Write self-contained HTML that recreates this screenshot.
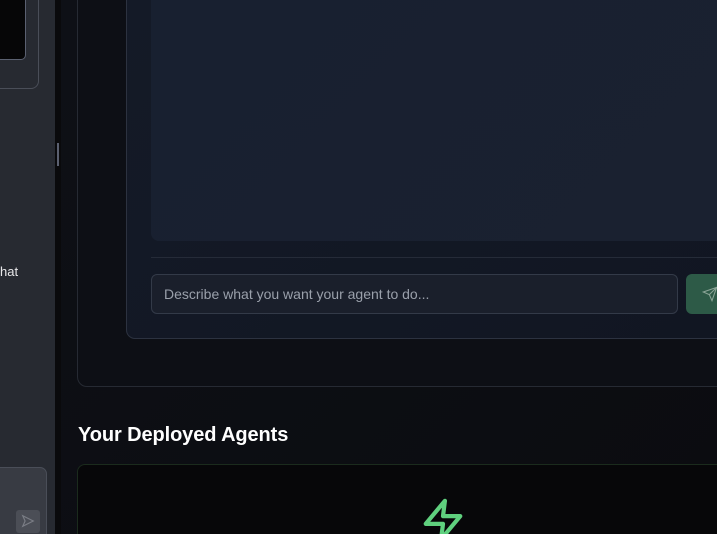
<!DOCTYPE html>
<html><head><meta charset="utf-8"><style>
*{margin:0;padding:0;box-sizing:border-box}
html,body{width:717px;height:534px;overflow:hidden}
body{background:#0b0c0f;font-family:"Liberation Sans",sans-serif;position:relative}
.side{position:absolute;left:0;top:0;width:55px;height:534px;background:#272a31;overflow:hidden}
.gut{position:absolute;left:55px;top:0;width:6px;height:534px;background:#0a0a0c}
.handle{position:absolute;left:57px;top:143px;width:2px;height:23px;background:#5b6070}
.main{position:absolute;left:61px;top:0;right:0;bottom:0;background:linear-gradient(135deg,#0e1016,#0b0c10)}
</style></head><body>
<div class="side">
 <div style="position:absolute;left:-10px;top:-10px;width:49px;height:99px;border:1px solid #4a4e58;border-radius:8px"></div>
 <div style="position:absolute;left:-10px;top:-10px;width:36px;height:70px;border:1px solid #5a6070;border-radius:5px;background:#060607"></div>
 <div style="position:absolute;left:0;top:264px;color:#e8e8ea;font-size:13px">hat</div>
 <div style="position:absolute;left:-10px;top:467px;width:57px;height:80px;border:1px solid #4a4e58;border-radius:7px;background:#383b43"></div>
 <div style="position:absolute;left:16px;top:510px;width:24px;height:23px;border-radius:3px;background:#4b4e56"></div>
 <svg style="position:absolute;left:21px;top:514px" width="14" height="14" viewBox="0 0 24 24" fill="none" stroke="#7a7d85" stroke-width="2"><path d="M3 3l18 9-18 9 4-9z"/></svg>
</div>
<div class="gut"></div><div class="handle"></div>
<div class="main"></div>
<div style="position:absolute;left:77px;top:-10px;width:660px;height:397px;border:1px solid #262a33;border-radius:10px;background:#0d0f15"></div>
<div style="position:absolute;left:126px;top:-10px;width:620px;height:349px;border:1px solid #2c3240;border-radius:9px;background:linear-gradient(135deg,#141a27,#111622)"></div>
<div style="position:absolute;left:151px;top:-10px;width:600px;height:251px;border-radius:8px;background:linear-gradient(135deg,#182030,#1a2130)"></div>
<div style="position:absolute;left:151px;top:257px;width:580px;height:1px;background:#252b38"></div>
<div style="position:absolute;left:151px;top:274px;width:527px;height:40px;border:1px solid #333a48;border-radius:6px;background:#1a1f2b;color:#9aa0ab;font-size:14px;line-height:38px;padding-left:12px">Describe what you want your agent to do...</div>
<div style="position:absolute;left:686px;top:274px;width:50px;height:40px;border-radius:6px;background:#2d5a47"></div>
<svg style="position:absolute;left:702px;top:286px" width="16" height="16" viewBox="0 0 24 24" fill="none" stroke="#8aa496" stroke-width="1.6"><path d="M22 2L11 13M22 2l-7 20-4-9-9-4z"/></svg>
<div style="position:absolute;left:78px;top:424px;color:#fff;font-size:20px;font-weight:bold;letter-spacing:-0.1px">Your Deployed Agents</div>
<div style="position:absolute;left:77px;top:464px;width:660px;height:90px;border:1px solid #1b2b1d;border-radius:8px;background:#070709"></div>
<svg style="position:absolute;left:420px;top:497px" width="46" height="46" viewBox="0 0 24 24" fill="none" stroke="#5fd07e" stroke-width="2.2" stroke-linejoin="round" stroke-linecap="round"><path d="M13 2L3 14h9l-1 8 10-12h-9z"/></svg>
</body></html>
